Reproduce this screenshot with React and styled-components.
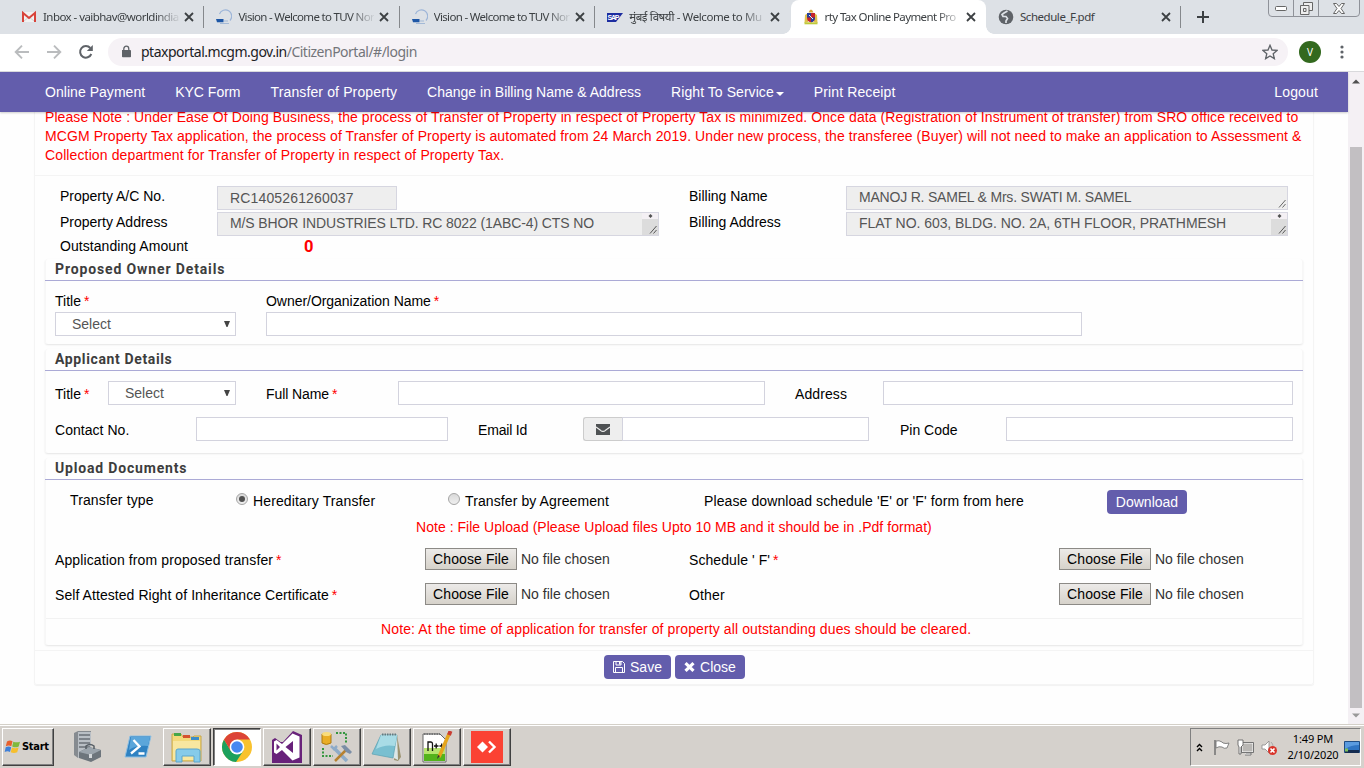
import React from 'react';
import styled, { createGlobalStyle, css } from 'styled-components';

const purple = '#635dac';
const sans = '"Liberation Sans", Arial, sans-serif';
const tahoma = '"Noto Sans", "DejaVu Sans", sans-serif';

const Global = createGlobalStyle`
  * { box-sizing: border-box; }
  html, body { margin: 0; padding: 0; }
  body { width: 1364px; height: 768px; overflow: hidden; background: #fefefe; font: 14px/20px ${sans}; color: #000; }
  svg { display: block; flex: none; }
`;

const Screen = styled.div`
  display: flex;
  flex-direction: column;
  width: 1364px;
  height: 768px;
`;

/* ---------- browser chrome ---------- */
const TabStrip = styled.div`
  display: flex;
  height: 34px;
  padding-left: 9px;
  background: #dde1e6;
  position: relative;
`;
const Tab = styled.div`
  display: flex;
  align-items: center;
  width: 195.4px;
  height: 34px;
  padding-left: 12px;
  position: relative;
  ${p => p.$active && css`
    background: #fff;
    border-radius: 8px 8px 0 0;
    &::before, &::after {
      content: '';
      position: absolute;
      bottom: 0;
      width: 8px;
      height: 8px;
    }
    &::before { left: -8px; background: radial-gradient(circle at 0 0, transparent 7.5px, #fff 8px); }
    &::after { right: -8px; background: radial-gradient(circle at 100% 0, transparent 7.5px, #fff 8px); }
  `}
  ${p => p.$sep && css`border-right: 1px solid transparent; border-image: linear-gradient(transparent 7px, #85888c 7px, #85888c 27px, transparent 27px) 1;`}
`;
const TabTitle = styled.div`
  width: 136px;
  margin-left: 6px;
  white-space: nowrap;
  font: 11.5px/18px ${tahoma};
  letter-spacing: ${p => p.$ls || 0}px;
  color: #3c4043;
  mask-image: ${p => (p.$full ? 'none' : 'linear-gradient(90deg, #000 112px, transparent 138px)')};
`;
const TabClose = styled.svg`
  margin-left: 5px;
`;
const NewTab = styled.div`
  display: flex;
  align-items: center;
  padding-left: 16px;
`;
const WindowControls = styled.div`
  position: absolute;
  top: -1px;
  right: 4px;
  display: grid;
  grid-template-columns: 24px 25px 1fr;
  width: 92px;
  height: 18px;
  border: 1px solid #8f9299;
  border-radius: 0 0 4px 4px;
`;
const WinButton = styled.div`
  display: grid;
  place-items: center;
  & + & { border-left: 1px solid #8f9299; }
`;
const Toolbar = styled.div`
  display: flex;
  align-items: center;
  height: 38px;
  padding: 0 0 1px 14px;
  background: #fff;
  border-bottom: 1px solid #d9d9dc;
`;
const NavIcons = styled.div`
  display: flex;
  gap: 16px;
  width: 94px;
`;
const Omnibox = styled.div`
  display: flex;
  align-items: center;
  width: 1180px;
  height: 28px;
  padding: 0 10px 0 12px;
  border-radius: 14px;
  background: #f6f2f6;
`;
const Url = styled.div`
  flex: 1;
  margin-left: 9px;
  font: 14px/20px ${tahoma};
  letter-spacing: -0.5px;
  color: #73757a;
  b { font-weight: 400; color: #202124; }
`;
const Avatar = styled.div`
  width: 22px;
  height: 22px;
  margin: 0 19px 0 11px;
  border-radius: 50%;
  background: #33691e;
  color: #fff;
  text-align: center;
  font: 10px/22px ${tahoma};
`;

/* ---------- page ---------- */
const Viewport = styled.div`
  display: flex;
  height: 652px;
  overflow: hidden;
`;
const Page = styled.div`
  width: 1348px;
  height: 652px;
`;
const Navbar = styled.nav`
  position: relative;
  z-index: 1;
  display: flex;
  gap: 30px;
  height: 40px;
  padding: 0 30px 0 45px;
  background: ${purple};
  box-shadow: 0 1px 2px rgba(0, 0, 0, 0.2);
  line-height: 40px;
  color: #fff;
`;
const NavItem = styled.a`
  white-space: nowrap;
  letter-spacing: ${p => p.$ls || 0}px;
  &:last-child { margin-left: auto; }
`;
const Caret = styled.span`
  display: inline-block;
  margin-left: 2px;
  vertical-align: 1px;
  border: 4px solid transparent;
  border-top-color: #fff;
  border-bottom: 0;
`;
const Panel = styled.main`
  width: 1280px;
  height: 577px;
  margin-left: 34px;
  padding: 0 10px;
  border: 1px solid #f4f4f4;
  border-top: 0;
  border-radius: 0 0 3px 3px;
  box-shadow: 0 1px 1px rgba(0, 0, 0, 0.05);
`;
const Notice = styled.p`
  height: 67px;
  margin: -4px 0 0;
  color: #f00;
  line-height: 19px;
  white-space: nowrap;
`;
const NoticeLine = styled.span`
  display: block;
  letter-spacing: ${p => p.$ls || 0}px;
`;
const Property = styled.section`
  display: grid;
  grid-template-columns: 157px 442px 30px 157px 442px;
  grid-template-rows: 24px 24px 20px;
  row-gap: 2px;
  height: 84px;
  margin: 0 -10px;
  padding: 10px 0 0 25px;
  border-top: 1px solid #f4f4f4;
`;
const Label = styled.label`
  margin-top: ${p => p.$mt || 0}px;
  white-space: nowrap;
  line-height: 20px;
  letter-spacing: ${p => p.$ls || 0}px;
  i { font-style: normal; color: #f00; margin-left: 3px; }
`;
const ReadOnly = styled.div`
  display: flex;
  justify-content: space-between;
  width: ${p => p.$w || 442}px;
  height: 24px;
  padding-left: 12px;
  border: 1px solid #d6d6e0;
  background: #eee;
  color: #555;
  line-height: ${p => p.$lh || 21}px;
  white-space: nowrap;
  letter-spacing: ${p => p.$ls || 0}px;
`;
const Outstanding = styled.b`
  padding-left: 87px;
  margin-top: -2px;
  font: 700 16.5px/22px Roboto, sans-serif;
  color: #f00;
`;
const Card = styled.section`
  height: ${p => p.$h}px;
  margin-bottom: ${p => p.$mb || 0}px;
  border: 1px solid #f7f7f7;
  border-width: 0 1px;
  border-radius: 3px;
  box-shadow: 0 1px 2px rgba(0, 0, 0, 0.1);
`;
const CardTitle = styled.h2`
  height: 22px;
  margin: 0 -1px;
  padding-left: 10px;
  border-bottom: 1px solid #abaad6;
  font: 700 14px/20px Roboto, sans-serif;
  letter-spacing: ${p => p.$ls}px;
  color: #3d3d3d;
`;
const Row = styled.div`
  display: grid;
  grid-template-columns: ${p => p.$cols};
  align-items: center;
  height: ${p => p.$h || 24}px;
  margin-top: ${p => p.$mt || 0}px;
  padding-left: ${p => p.$pl ?? 9}px;
`;
const Input = styled.input`
  width: 100%;
  height: 24px;
  border: 1px solid #d3d3de;
  background: #fff;
  outline: 0;
`;
const SelectBox = styled.div`
  display: flex;
  align-items: center;
  justify-content: space-between;
  height: 24px;
  padding: 0 5px 0 16px;
  border: 1px solid #d3d3de;
  background: #fff;
  color: #555;
`;
const EmailGroup = styled.div`
  display: grid;
  grid-template-columns: 39px 1fr;
`;
const Addon = styled.span`
  display: grid;
  place-items: center;
  border: 1px solid #ccc;
  border-right: 0;
  border-radius: 3px 0 0 3px;
  background: #eee;
`;
const Radio = styled.span`
  display: grid;
  place-items: center;
  width: 12px;
  height: 12px;
  margin-top: -6px;
  border: 1px solid #a5a5a5;
  border-radius: 50%;
  background: linear-gradient(#d9d9d9, #efefef);
  &::after {
    content: '';
    width: 6px;
    height: 6px;
    border-radius: 50%;
    background: ${p => (p.$on ? '#505050' : 'transparent')};
  }
`;
const Button = styled.button`
  display: flex;
  align-items: center;
  justify-content: center;
  gap: 5px;
  width: ${p => p.$w}px;
  height: 24px;
  padding: 0;
  border: 0;
  border-radius: 4px;
  background: ${purple};
  color: #fff;
  font: 14px/24px ${sans};
`;
const FileInput = styled.div`
  display: flex;
  align-items: center;
  gap: 4px;
  margin-top: -2px;
  color: #333;
  white-space: nowrap;
`;
const FileButton = styled.button`
  width: 92px;
  height: 22px;
  padding: 0;
  border: 1px solid #8c8a86;
  background: linear-gradient(#eceae8, #d6d2ca);
  font: 14px/20px ${sans};
  letter-spacing: 0.1px;
  color: #000;
`;
const RedNote = styled.p`
  height: ${p => p.$h}px;
  margin: ${p => p.$mt || 0}px 0 0;
  padding: ${p => p.$pt || 0}px 0 0 ${p => p.$pl}px;
  border-top: 1px solid ${p => (p.$rule ? '#f2f2f2' : 'transparent')};
  color: #f00;
  line-height: 20px;
  white-space: nowrap;
  letter-spacing: ${p => p.$ls || 0}px;
`;
const Actions = styled.div`
  display: flex;
  gap: 4px;
  margin: 5px -10px 0;
  padding: 4px 0 0 569px;
  border-top: 1px solid #f4f4f4;
`;
const Scrollbar = styled.div`
  display: flex;
  flex-direction: column;
  align-items: center;
  width: 16px;
  height: 652px;
  padding: 7px 0 6px;
  background: #f4f0f4;
`;
const Thumb = styled.div`
  width: 12px;
  height: 561px;
  margin: 63px 0 auto;
  background: #c2bfc2;
`;

/* ---------- taskbar ---------- */
const Taskbar = styled.footer`
  display: flex;
  align-items: center;
  height: 44px;
  padding: 3px 3px 2px 2px;
  border-top: 1px solid #d4d0c8;
  background: linear-gradient(#fff 1px, #d5d1cc 1px);
`;
const raised = css`
  border: 1px solid;
  border-color: #fff #404040 #404040 #fff;
  box-shadow: inset -1px -1px #808080;
`;
const StartButton = styled.div`
  display: flex;
  align-items: center;
  gap: 1px;
  width: 52px;
  height: 38px;
  margin-right: 9px;
  padding-left: 1px;
  ${raised}
  font: 700 11px/16px "DejaVu Sans Condensed", "DejaVu Sans", sans-serif;
  letter-spacing: -0.3px;
`;
const Quick = styled.div`
  display: grid;
  place-items: center;
  width: 50px;
`;
const TaskButton = styled.div`
  display: grid;
  place-items: center;
  width: 48px;
  height: 38px;
  margin-right: 2px;
  ${raised}
  ${p => p.$pressed && css`
    background: #fff;
    border-color: #404040 #fff #fff #404040;
    box-shadow: inset 1px 1px #808080;
  `}
`;
const Tray = styled.div`
  display: flex;
  align-items: center;
  width: 171px;
  height: 38px;
  margin-left: auto;
  padding-left: 5px;
  border: 1px solid;
  border-color: #808080 #fff #fff #808080;
`;
const TrayIcons = styled.div`
  display: flex;
  align-items: center;
  gap: 7px;
  margin-left: 10px;
`;
const Clock = styled.div`
  width: 54px;
  margin: 0 5px 0 9px;
  text-align: center;
  white-space: nowrap;
  font: 11px/16px ${tahoma};
  letter-spacing: -0.15px;
`;

/* ---------- icons ---------- */
const CloseX = () => (
  <TabClose width="10" height="10" viewBox="0 0 10 10"><path d="M1 1l8 8M9 1L1 9" stroke="#3c4043" strokeWidth="1.8" /></TabClose>
);
const Gmail = () => (
  <svg width="16" height="16" viewBox="0 0 16 16">
    <path d="M2 3h12v10H2z" fill="#f1f1f1" /><path d="M3 12l5-4 5 4" stroke="#d0d0d0" fill="none" />
    <path d="M2 13V4l6 5 6-5v9" fill="none" stroke="#d8433a" strokeWidth="2" />
  </svg>
);
const Tuv = () => (
  <svg width="16" height="16" viewBox="0 0 16 16">
    <path d="M3.500 5a6.300 6.300 0 1 1 10.500 6.500" fill="none" stroke="#9db5d8" strokeWidth="1.200" />
    <path d="M0 10h7.500v3.300H1z" fill="#1e57a6" /><path d="M8 12h4M4 14.500h9" stroke="#a3b9d6" />
  </svg>
);
const Sap = () => (
  <svg width="16" height="16" viewBox="0 0 16 16">
    <path d="M0 4h16l-7 9H0z" fill="#1d2da0" />
    <text x="0.5" y="11" fontFamily="Liberation Sans" fontWeight="700" fontSize="7" fill="#fff" textLength="12">SAP</text>
  </svg>
);
const Crest = () => (
  <svg width="16" height="16" viewBox="0 0 16 16">
    <path d="M5.500 3.500q2.500-6 5 0z" fill="#d8a93a" /><path d="M2 6l3-2v9l-3.500 1zM14 6l-3-2v9l3.500 1z" fill="#dfc14d" />
    <path d="M4 4h8v5q0 3.500-4 4.500-4-1-4-4.500z" fill="#c5252c" /><path d="M4 4h4v4.500H4zM8 8.500h4q0 4-4 5z" fill="#293f9b" />
    <path d="M1.500 14.300h13" stroke="#bfc93a" strokeWidth="2" /><path d="M6 6l4 4" stroke="#eee" />
  </svg>
);
const Globe = () => (
  <svg width="16" height="16" viewBox="0 0 16 16">
    <circle cx="8" cy="8" r="7.3" fill="#5f6368" />
    <path d="M9.500 2L6 4 4 5.500 5 7.500h3L9.500 9.500 8 12v2" fill="none" stroke="#dde1e6" strokeWidth="1.700" />
  </svg>
);
const ArrowLeft = () => <svg width="16" height="16" viewBox="0 0 16 16"><path d="M15 8H2M8 1.7L1.7 8 8 14.3" fill="none" stroke="#babcbe" strokeWidth="1.9" /></svg>;
const ArrowRight = () => <svg width="16" height="16" viewBox="0 0 16 16"><path d="M1 8h13M8 1.7L14.3 8 8 14.3" fill="none" stroke="#babcbe" strokeWidth="1.9" /></svg>;
const Reload = () => <svg width="16" height="16" viewBox="0 0 16 16"><path d="M13.3 10a5.8 5.8 0 1 1-1-6" fill="none" stroke="#5f6368" strokeWidth="2" /><path d="M14.8 1v6h-6z" fill="#5f6368" /></svg>;
const Lock = () => <svg width="12" height="14" viewBox="0 0 12 14"><path d="M2 5h8.200q.8 0 .8.800v5.700q0 .8-.8.800H2.800Q2 12.300 2 11.500z" fill="#5f6368" /><path d="M3.800 5.500V4a2.300 2.600 0 0 1 5 0v1.500" fill="none" stroke="#5f6368" strokeWidth="1.300" /></svg>;
const Star = () => <svg width="16" height="16" viewBox="0 0 24 24"><path d="M12 2l3 7 7.500.6-5.700 5 1.700 7.400-6.500-4-6.500 4 1.700-7.400-5.700-5L9 9z" fill="none" stroke="#5f6368" strokeWidth="2" /></svg>;
const Dots = () => <svg width="4" height="14" viewBox="0 0 4 14"><g fill="#5f6368"><circle cx="2" cy="2" r="1.600" /><circle cx="2" cy="7" r="1.600" /><circle cx="2" cy="12" r="1.600" /></g></svg>;
const Plus = () => <svg width="12" height="12" viewBox="0 0 12 12"><path d="M6 0v12M0 6h12" stroke="#3c4043" strokeWidth="2" /></svg>;
const Minimize = () => <svg width="13" height="6" viewBox="0 0 13 6"><rect x=".5" y="1.500" width="11" height="4" rx="1" fill="#fff" stroke="#666" /></svg>;
const Restore = () => <svg width="13" height="13" viewBox="0 0 13 13"><g fill="#eee" stroke="#666"><path d="M3.500.5h9v8h-9z" /><path d="M.5 3.500h8.500v9H.5zM3.500 6.500h2.500v3H3.500z" /></g></svg>;
const WinClose = () => <svg width="12" height="11" viewBox="0 0 12 11"><path d="M.5.5h3L6 3.500 8.500.5h3L8 5.500l3.500 5h-3L6 7.500l-2.500 3h-3L4 5.500z" fill="#fff" stroke="#666" /></svg>;
const Triangle = ({ up, color = '#505050' }) => <svg width="8" height="5" viewBox="0 0 8 5"><path d={up ? 'M0 4.500h8L4 .5z' : 'M0 .5h8L4 4.500z'} fill={color} /></svg>;
const SelectArrow = () => <svg width="6" height="6" viewBox="0 0 6 6"><path d="M0 0h6L3.500 6h-1z" fill="#444" /></svg>;
const Resizer = () => <svg width="9" height="22" viewBox="0 0 9 22"><path d="M1 20.500l6.500-7.500M4.500 20.500L7.500 17" stroke="#666" /></svg>;
const AreaScroll = () => (
  <svg width="16" height="22" viewBox="0 0 16 22">
    <path d="M0 0h16v6H0z" fill="#f4f0f4" /><path d="M0 6h16v16H0z" fill="#dcdcdc" />
    <path d="M6.500 3l2-2 2 2zM6.500 3h4l-2 2z" fill="#505050" />
    <path d="M8 20.500l6.500-7.500M11.500 20.500l3-3.500" stroke="#555" />
  </svg>
);
const Envelope = () => <svg width="14" height="11" viewBox="0 0 14 11"><path d="M0 0h14v11H0z" fill="#4f5254" /><path d="M0 3l4.500 3.300Q7 8.500 9.500 6.300L14 3" fill="none" stroke="#eee" strokeWidth="1.100" /></svg>;
const Floppy = () => <svg width="12" height="12" viewBox="0 0 12 12"><path d="M.5.5h9l2 2v9H.5zM3 .5V4h5V.5M2.500 11.500v-5h7v5" fill="none" stroke="#fff" /><path d="M6 1h1.500v2.500H6z" fill="#fff" /></svg>;
const Cross = () => <svg width="11" height="10" viewBox="0 0 11 10"><path d="M1.500 1.200l8 7.600M9.500 1.200l-8 7.600" stroke="#fff" strokeWidth="3.200" /></svg>;
const WinLogo = () => (
  <svg width="17" height="16" viewBox="-1 0 17 16">
    <path d="M2 2.500Q5 .5 7.500 2.300L6.300 7.300Q3.800 5.800.8 7.300z" fill="#e8602c" />
    <path d="M8.300 2.700q3 1.300 6.700 0L13.700 7.500q-3.400 1.700-6.500 0z" fill="#7fb93c" />
    <path d="M.7 8.300q3-1.800 5.500 0L5 13Q2.500 11.700-.3 13z" fill="#3f80d8" />
    <path d="M7 8.500q3 1.500 6.600 0L12.200 13.300q-3.400 1.500-6.500 0z" fill="#f6bf2d" />
  </svg>
);
const Server = () => (
  <svg width="30" height="32" viewBox="0 0 30 32">
    <path d="M1 2l4-2h13v27H5l-4-3z" fill="#868b90" /><path d="M5 1h13v26H5z" fill="#b9bfc5" />
    <path d="M6 4h11M6 8h11M6 12h11M6 16h11" stroke="#6a7077" strokeWidth="1.500" />
    <path d="M6 21l10-5 12 3v7l-10 5-12-4z" fill="#6d757c" /><path d="M6 21l10-5 12 3-10 5z" fill="#9ba4ac" />
    <path d="M13 18v-3q4-3 8 0v3" fill="none" stroke="#555d64" strokeWidth="1.500" /><path d="M16 23h3v4h-3z" fill="#d3d7da" />
  </svg>
);
const PowerShell = () => (
  <svg width="28" height="24" viewBox="0 0 28 24">
    <path d="M6 1h21l-5 21H1z" fill="#2f82c2" stroke="#8ec0e3" /><path d="M7 2h19l-2 9Q12 10 5 15z" fill="#5ba6da" />
    <path d="M9.500 5l6 6.500-8.500 7M14.500 18.500h6" fill="none" stroke="#fff" strokeWidth="2.300" />
  </svg>
);
const Explorer = () => (
  <svg width="32" height="32" viewBox="0 0 32 32">
    <path d="M1 3h9l2 3h10l1-1h7v25H1z" fill="#f3d97a" stroke="#c6a64a" /><path d="M2 10h27v19H2z" fill="#f8e7a0" />
    <path d="M3 2h7v3H3z" fill="#45a649" /><path d="M12 4h7v3h-7z" fill="#d5512f" /><path d="M20 6h8v3h-8z" fill="#3b8cc9" />
    <path d="M5 31V20q0-2 2-2h19q3 0 3 2v11h-6v-6H11v6z" fill="#86cbea" stroke="#5ba5cc" />
  </svg>
);
const Chrome = () => (
  <svg width="32" height="32" viewBox="0 0 32 32">
    <circle cx="16" cy="16" r="15" fill="#f9c22e" />
    <path d="M3 8.500A15 15 0 0 0 15 31l7.500-11.500L16 16 9.500 19.500z" fill="#1ca15d" />
    <path d="M3 8.500A15 15 0 0 1 29 8.500H16L9.500 19.500z" fill="#dc4437" />
    <circle cx="16" cy="16" r="7.400" fill="#fff" /><circle cx="16" cy="16" r="5.800" fill="#4688f1" />
  </svg>
);
const VisualStudio = () => (
  <svg width="32" height="32" viewBox="0 0 32 32">
    <path d="M1 11h30v21H1z" fill="#68217a" /><path d="M22 0l9 4v24l-9 4L11 21l-7 5-3-2V9l3-2 7 5z" fill="#68217a" />
    <path d="M21.500 2.500l7 3v21l-7 3L11 19l-5.500 4L3 21.500v-11L5.500 9l5.500 4zM22 10l-7.500 6 7.500 6zM5.500 12.500v7L9 16z" fill="#fff" fillRule="evenodd" />
  </svg>
);
const DbTools = () => (
  <svg width="32" height="32" viewBox="0 0 32 32">
    <path d="M1 3v9q4 3 9 0V3z" fill="#e9ad25" stroke="#ae7b12" /><ellipse cx="5.500" cy="3" rx="4.500" ry="2" fill="#f9dc7b" />
    <path d="M15 2h10v10M2 17v8h10" fill="none" stroke="#34963f" strokeWidth="2" strokeDasharray="2 1.500" />
    <path d="M13 17l13 13" stroke="#8eabc8" strokeWidth="3.500" /><path d="M10 15l3 3 3-3" fill="none" stroke="#8eabc8" strokeWidth="2.500" />
    <path d="M26 18L14 30" stroke="#b68130" strokeWidth="2.500" /><path d="M20 15l4-1 7 7-2 2-4-2z" fill="#7b8ea6" />
  </svg>
);
const Notepad = () => (
  <svg width="32" height="32" viewBox="0 0 32 32">
    <path d="M26 4l4 22-3 4-4-1z" fill="#9b9270" /><path d="M10 4h16l1 25-4-2z" fill="#dce7e8" />
    <path d="M10 4h16L22 27 1 23z" fill="#79bfd0" stroke="#5aa0b2" strokeWidth=".7" /><path d="M10 4h16l-2 11Q14 13 5 18z" fill="#a9dce6" />
    <path d="M11 3.500h15" stroke="#637a80" strokeWidth="2" strokeDasharray="1.500 1" />
  </svg>
);
const NotepadPP = () => (
  <svg width="32" height="32" viewBox="0 0 32 32">
    <path d="M2 3h17l6 6v22H2z" fill="#fff" stroke="#666" /><path d="M3 17h21v13H3z" fill="#b7e56f" /><path d="M3 23h21v7H3z" fill="#54b31c" />
    <path d="M3 3h16" stroke="#777" strokeWidth="2" strokeDasharray="1.500 1" />
    <path d="M7 20v-9h3q1.500 0 1.500 2v7M13 15h4.500M15.200 12.500v5M18.500 15H23M20.700 12.500v5" fill="none" stroke="#111" strokeWidth="1.300" />
    <path d="M28 3L18 26" stroke="#e5a51d" strokeWidth="3.500" /><path d="M29.500 0l-1.500 4" stroke="#c93d33" strokeWidth="4" /><path d="M17 24l-1 4 3-3z" fill="#333" />
  </svg>
);
const AnyDesk = () => (
  <svg width="32" height="32" viewBox="0 0 32 32">
    <path d="M0 0h32v32H0z" fill="#fb4233" /><path d="M6 16l5.500-5.500L17 16l-5.500 5.500z" fill="#fff" />
    <path d="M18 10.500l5.500 5.500-5.500 5.500" fill="none" stroke="#fff" strokeWidth="2.400" />
  </svg>
);
const Chevrons = () => <svg width="7" height="9" viewBox="0 0 7 9"><path d="M1 4l2.500-2.500L6 4M1 8l2.500-2.500L6 8" fill="none" stroke="#000" strokeWidth="1.400" /></svg>;
const Flag = () => <svg width="17" height="17" viewBox="0 0 17 17"><path d="M2 1v15" stroke="#777" strokeWidth="1.600" /><path d="M3 2q3-1 6 1l1 1q3 1 6 0l-2 5q-3 1-5-1-3-1-6 1z" fill="#fff" stroke="#777" strokeWidth=".9" /></svg>;
const Network = () => <svg width="17" height="17" viewBox="0 0 17 17"><path d="M5 4h11v9H5z" fill="#b9b7b4" stroke="#fff" /><path d="M4.500 3.500h12v10h-12z" fill="none" stroke="#666" strokeWidth=".9" /><path d="M9 14h5v2H8" stroke="#777" fill="#fff" /><path d="M1 1h5v5l-2 2v7H2V8L1 6z" fill="#fff" stroke="#666" strokeWidth=".9" /></svg>;
const Muted = () => <svg width="17" height="17" viewBox="0 0 17 17"><path d="M1 6h3l4-4v12l-4-4H1z" fill="#fff" stroke="#888" strokeWidth=".8" /><path d="M10 3q2 2 2 4" fill="none" stroke="#aaa" /><circle cx="11.500" cy="11.500" r="4.500" fill="#d8352b" /><path d="M9.500 9.500l4 4M13.500 9.500l-4 4" stroke="#fff" strokeWidth="1.600" /></svg>;
const Desktop = () => <svg width="16" height="13" viewBox="0 0 16 13"><path d="M.5.5h15v11H.5z" fill="#2f75c4" stroke="#1f4d84" /><path d="M1 1h14v3Q7 4 1 8z" fill="#5a9be0" /><path d="M1 9h14v3H1z" fill="#142c50" /><path d="M1 7.500h3v3H1z" fill="#7fc05a" /></svg>;

const tabs = [
  { icon: <Gmail />, title: 'Inbox - vaibhav@worldindia', sep: true, ls: -0.55 },
  { icon: <Tuv />, title: 'Vision - Welcome to TUV Nor', sep: true, ls: -0.68 },
  { icon: <Tuv />, title: 'Vision - Welcome to TUV Nor', sep: true, ls: -0.68 },
  { icon: <Sap />, title: 'मुंबई विषयी - Welcome to Mu', ls: -0.4 },
  { icon: <Crest />, title: 'rty Tax Online Payment Pro', active: true, ls: -0.6 },
  { icon: <Globe />, title: 'Schedule_F.pdf', sep: true, full: true, ls: -0.45 },
];

const ChooseFile = () => (
  <FileInput><FileButton>Choose File</FileButton>No file chosen</FileInput>
);
const Required = () => <i>*</i>;

export default function App() {
  return (
    <Screen>
      <Global />
      <TabStrip>
        {tabs.map((t, i) => (
          <Tab key={i} $active={t.active} $sep={t.sep}>
            {t.icon}
            <TabTitle $full={t.full} $ls={t.ls}>{t.title}</TabTitle>
            <CloseX />
          </Tab>
        ))}
        <NewTab><Plus /></NewTab>
        <WindowControls>
          <WinButton><Minimize /></WinButton>
          <WinButton><Restore /></WinButton>
          <WinButton><WinClose /></WinButton>
        </WindowControls>
      </TabStrip>
      <Toolbar>
        <NavIcons><ArrowLeft /><ArrowRight /><Reload /></NavIcons>
        <Omnibox>
          <Lock />
          <Url><b>ptaxportal.mcgm.gov.in</b>/CitizenPortal/#/login</Url>
          <Star />
        </Omnibox>
        <Avatar>V</Avatar>
        <Dots />
      </Toolbar>

      <Viewport>
        <Page>
          <Navbar>
            <NavItem $ls={0.04}>Online Payment</NavItem>
            <NavItem>KYC Form</NavItem>
            <NavItem $ls={0.13}>Transfer of Property</NavItem>
            <NavItem>Change in Billing Name &amp; Address</NavItem>
            <NavItem $ls={0.06}>Right To Service<Caret /></NavItem>
            <NavItem $ls={0.12}>Print Receipt</NavItem>
            <NavItem $ls={0.15}>Logout</NavItem>
          </Navbar>
          <Panel>
            <Notice>
              <NoticeLine $ls={0.084}>Please Note : Under Ease Of Doing Business, the process of Transfer of Property in respect of Property Tax is minimized. Once data (Registration of Instrument of transfer) from SRO office received to</NoticeLine>
              <NoticeLine $ls={0.084}>MCGM Property Tax application, the process of Transfer of Property is automated from 24 March 2019. Under new process, the transferee (Buyer) will not need to make an application to Assessment &amp;</NoticeLine>
              <NoticeLine $ls={0.12}>Collection department for Transfer of Property in respect of Property Tax.</NoticeLine>
            </Notice>
            <Property>
              <Label>Property A/C No.</Label>
              <ReadOnly $w={180} $lh={23} $ls={0.15}>RC1405261260037</ReadOnly>
              <span />
              <Label>Billing Name</Label>
              <ReadOnly $ls={-0.2}>MANOJ R. SAMEL &amp; Mrs. SWATI M. SAMEL<Resizer /></ReadOnly>
              <Label>Property Address</Label>
              <ReadOnly $ls={-0.11}>M/S BHOR INDUSTRIES LTD. RC 8022 (1ABC-4) CTS NO<AreaScroll /></ReadOnly>
              <span />
              <Label>Billing Address</Label>
              <ReadOnly $ls={-0.05}>FLAT NO. 603, BLDG. NO. 2A, 6TH FLOOR, PRATHMESH<AreaScroll /></ReadOnly>
              <Label $mt={-2} $ls={0.06}>Outstanding Amount</Label>
              <Outstanding>0</Outstanding>
            </Property>

            <Card $h={85} $mb={5}>
              <CardTitle $ls={0.87}>Proposed Owner Details</CardTitle>
              <Row $cols="211px auto" $h={20} $mt={10}>
                <Label>Title<Required /></Label>
                <Label $ls={-0.04}>Owner/Organization Name<Required /></Label>
              </Row>
              <Row $cols="181px 30px 816px" $mt={1}>
                <SelectBox>Select<SelectArrow /></SelectBox>
                <span />
                <Input />
              </Row>
            </Card>

            <Card $h={104} $mb={5}>
              <CardTitle $ls={0.63}>Applicant Details</CardTitle>
              <Row $cols="53px 128px 30px 132px 367px 30px 88px 410px" $mt={10}>
                <Label $mt={2}>Title<Required /></Label>
                <SelectBox>Select<SelectArrow /></SelectBox>
                <span />
                <Label $mt={2} $ls={-0.08}>Full Name<Required /></Label>
                <Input />
                <span />
                <Label $mt={2} $ls={0.1}>Address</Label>
                <Input />
              </Row>
              <Row $cols="141px 252px 30px 105px 286px 31px 106px 287px" $mt={12}>
                <Label $mt={2} $ls={0.04}>Contact No.</Label>
                <Input />
                <span />
                <Label $mt={2} $ls={-0.18}>Email Id</Label>
                <EmailGroup><Addon><Envelope /></Addon><Input /></EmailGroup>
                <span />
                <Label $mt={2}>Pin Code</Label>
                <Input />
              </Row>
            </Card>

            <Card $h={187}>
              <CardTitle $ls={0.82}>Upload Documents</CardTitle>
              <Row $cols="166px 17px 195px 17px 239px 403px auto" $mt={10} $pl={24}>
                <Label $mt={-4} $ls={0.13}>Transfer type</Label>
                <Radio $on /><Label $mt={-2} $ls={0.13}>Hereditary Transfer</Label>
                <Radio /><Label $mt={-2} $ls={0.1}>Transfer by Agreement</Label>
                <Label $mt={-2} $ls={0.1}>Please download schedule 'E' or 'F' form from here</Label>
                <Button $w={80}>Download</Button>
              </Row>
              <RedNote $h={31} $pt={2} $pl={370} $ls={0.036}>Note : File Upload (Please Upload files Upto 10 MB and it should be in .Pdf format)</RedNote>
              <Row $cols="370px 264px 370px auto" $h={30}>
                <Label $ls={0.12}>Application from proposed transfer<Required /></Label>
                <ChooseFile />
                <Label $ls={0.08}>Schedule ' F'<Required /></Label>
                <ChooseFile />
              </Row>
              <Row $cols="370px 264px 370px auto" $h={30} $mt={5}>
                <Label $ls={0.065}>Self Attested Right of Inheritance Certificate<Required /></Label>
                <ChooseFile />
                <Label $ls={0.15}>Other</Label>
                <ChooseFile />
              </Row>
              <RedNote $h={27} $mt={8} $pl={335} $rule $ls={0.115}>Note: At the time of application for transfer of property all outstanding dues should be cleared.</RedNote>
            </Card>
            <Actions>
              <Button $w={67}><Floppy />Save</Button>
              <Button $w={70}><Cross />Close</Button>
            </Actions>
          </Panel>
        </Page>
        <Scrollbar>
          <Triangle up />
          <Thumb />
          <Triangle color="#999" />
        </Scrollbar>
      </Viewport>

      <Taskbar>
        <StartButton><WinLogo />Start</StartButton>
        <Quick><Server /></Quick>
        <Quick><PowerShell /></Quick>
        <TaskButton><Explorer /></TaskButton>
        <TaskButton $pressed><Chrome /></TaskButton>
        <TaskButton><VisualStudio /></TaskButton>
        <TaskButton><DbTools /></TaskButton>
        <TaskButton><Notepad /></TaskButton>
        <TaskButton><NotepadPP /></TaskButton>
        <TaskButton><AnyDesk /></TaskButton>
        <Tray>
          <Chevrons />
          <TrayIcons><Flag /><Network /><Muted /></TrayIcons>
          <Clock>1:49 PM<br />2/10/2020</Clock>
          <Desktop />
        </Tray>
      </Taskbar>
    </Screen>
  );
}
